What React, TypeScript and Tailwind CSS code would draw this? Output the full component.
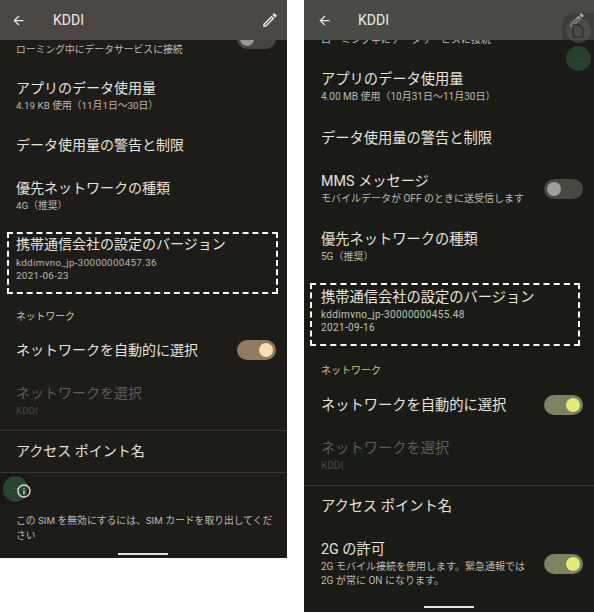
import type { ReactNode } from "react";

const FONT = "font-['Roboto','Noto_Sans_CJK_JP',sans-serif]";

type RowProps = {
  className: string;
  title?: string;
  sub?: string[];
  dim?: boolean;
  wide?: boolean;
  right?: ReactNode;
};

// the right screenshot is scaled very slightly larger than the left one
function Row({ className, title, sub, dim, wide, right }: RowProps) {
  return (
    <div className={`flex items-center justify-between ${className}`}>
      <div className="min-w-0">
        <p className={`${wide ? "text-[14.25px]" : "text-[14px]"} leading-[20px] ${dim ? "text-[#5f5b57]" : "text-[#e8e2dc]"}`}>{title}</p>
        {sub && (
          <div className="mt-[1px]">
            {sub.map((s) => (
              <p key={s} className={`${wide ? "text-[10px]" : "text-[9.8px]"} leading-[14px] ${dim ? "text-[#4b4844]" : "text-[#bfb8b1]"}`}>
                {s}
              </p>
            ))}
          </div>
        )}
      </div>
      {right}
    </div>
  );
}

function Toggle({ on, track, thumb }: { on: boolean; track: string; thumb: string }) {
  return (
    <div className={`flex h-[20px] w-[39px] shrink-0 items-center rounded-full px-[3px] ${on ? "justify-end" : "justify-start"} ${track}`}>
      <div className={`h-[14px] w-[14px] rounded-full ${thumb}`} />
    </div>
  );
}

function Header({ bg, pad, gap }: { bg: string; pad: string; gap: string }) {
  return (
    <div className={`relative z-10 flex h-[40px] items-center ${bg} ${pad}`}>
      <svg viewBox="0 0 24 24" className="h-[15px] w-[15px] fill-[#efe9e4]">
        <path d="M20 11H7.83l5.59-5.59L12 4l-8 8 8 8 1.41-1.41L7.83 13H20v-2z" />
      </svg>
      <span className={`text-[14px] text-[#efe9e4] ${gap}`}>KDDI</span>
      <svg viewBox="0 0 24 24" className="ml-auto h-[18px] w-[18px] fill-[#efe9e4]">
        <path d="M14.06 9.02l.92.92L5.92 19H5v-.92l9.06-9.06M17.66 3c-.25 0-.51.1-.7.29l-1.83 1.83 3.75 3.75 1.83-1.83c.39-.39.39-1.02 0-1.41l-2.34-2.34c-.2-.2-.45-.29-.71-.29zm-3.6 3.19L3 17.25V21h3.75L17.81 9.94l-3.75-3.75z" />
      </svg>
    </div>
  );
}

function LeftPhone() {
  const on = <Toggle on track="bg-[#8f7a62]" thumb="bg-[#fedcb5]" />;
  return (
    <div className="relative h-[558px] w-[287px] shrink-0 overflow-hidden bg-[#1e1c18]">
      <Header bg="bg-[#4c4744]" pad="pl-[11px] pr-[8px]" gap="ml-[27px]" />
      <div className="flex h-[20px] justify-between overflow-hidden pl-[16px] pr-[11px]">
        <p className="text-[9.8px] leading-[20px] text-[#bfb8b1]">ローミング中にデータサービスに接続</p>
        <div className="-mt-[11px]">
          <div className="flex h-[20px] w-[39px] items-center rounded-full bg-[#47433f] px-[3px]">
            <div className="h-[14px] w-[14px] rounded-full bg-[#9d978f]" />
          </div>
        </div>
      </div>
      <Row className="h-[66px] pl-[16px] pr-[11px] pt-[5px]" title="アプリのデータ使用量" sub={["4.19 KB 使用（11月1日〜30日）"]} />
      <Row className="h-[38px] pl-[16px] pr-[11px]" title="データ使用量の警告と制限" />
      <Row className="h-[63px] pl-[16px] pr-[11px]" title="優先ネットワークの種類" sub={["4G（推奨）"]} />
      <div className="ml-[7px] mr-[9px] mt-[5px] h-[62px] border-2 border-dashed border-white pl-[7px]">
        <p className="text-[14px] leading-[20px] text-[#e8e2dc]">携帯通信会社の設定のバージョン</p>
        <p className="mt-[2px] text-[9.8px] leading-[13px] tracking-[0.35px] text-[#bfb8b1]">kddimvno_jp-30000000457.36</p>
        <p className="text-[9.8px] leading-[13px] tracking-[0.35px] text-[#bfb8b1]">2021-06-23</p>
      </div>
      <p className="mt-[16px] pl-[16px] text-[9.8px] leading-[14px] text-[#dcc2a0]">ネットワーク</p>
      <Row className="mt-[7px] h-[38px] pl-[16px] pr-[11px]" title="ネットワークを自動的に選択" right={on} />
      <Row className="h-[61px] pl-[16px] pr-[11px] pt-[2px]" title="ネットワークを選択" sub={["KDDI"]} dim />
      <div className="h-px bg-[#3a3633]" />
      <Row className="h-[41px] pb-[2px] pl-[16px] pr-[11px]" title="アクセス ポイント名" />
      <div className="h-px bg-[#3a3633]" />
      <div className="ml-[16px] mt-[10px]">
        <svg viewBox="0 0 24 24" className="relative z-10 h-[16px] w-[16px] fill-[#e8e2dc]">
          <path d="M11 7h2v2h-2zm0 4h2v6h-2zm1-9C6.48 2 2 6.48 2 12s4.48 10 10 10 10-4.48 10-10S17.52 2 12 2zm0 18c-4.41 0-8-3.59-8-8s3.59-8 8-8 8 3.59 8 8-3.59 8-8 8z" />
        </svg>
      </div>
      <p className="mt-[14px] pl-[16px] pr-[11px] text-[9.8px] leading-[15px] text-[#bfb8b1]">
        この SIM を無効にするには、SIM カードを取り出してください
      </p>
      {/* floating bubble from the screenshot tool */}
      <div className="absolute left-0 top-[473px] flex h-[32px] w-[31px] items-center rounded-r-full bg-[#191714]">
        <div className="ml-[3px] flex h-[26px] w-[25px] items-center justify-center rounded-full bg-[#27452f] text-[8px] leading-none text-[#8b9a8d]">
          ···
        </div>
      </div>
      <div className="absolute bottom-[3px] left-[118px] h-[2px] w-[50px] bg-[#e4e0dc]" />
    </div>
  );
}

function RightPhone() {
  const on = <Toggle on track="bg-[#7e8262]" thumb="bg-[#e2ea78]" />;
  return (
    <div className="relative h-[612px] w-[290px] shrink-0 overflow-hidden bg-[#1a1b16]">
      <Header bg="bg-[#4a4b45]" pad="pl-[13px] pr-[8px]" gap="ml-[26px]" />
      <div className="h-[14px] overflow-hidden pl-[17px]">
        <p className="-mt-[7px] text-[10px] leading-[14px] text-[#c0c2b4]">ローミング中にデータサービスに接続</p>
      </div>
      <Row wide className="h-[65px] pl-[17px] pr-[11px]" title="アプリのデータ使用量" sub={["4.00 MB 使用（10月31日〜11月30日）"]} />
      <Row wide className="h-[38px] pl-[17px] pr-[11px]" title="データ使用量の警告と制限" />
      <Row wide className="h-[63px] pl-[17px] pr-[11px]" title="MMS メッセージ" sub={["モバイルデータが OFF のときに送受信します"]} right={<Toggle on={false} track="bg-[#47483f]" thumb="bg-[#a09f98]" />} />
      <Row wide className="h-[53px] pl-[17px] pr-[11px]" title="優先ネットワークの種類" sub={["5G（推奨）"]} />
      <div className="ml-[6px] mr-[14px] mt-[10px] h-[63px] border-2 border-dashed border-white pl-[9px] pt-[2px]">
        <p className="text-[14.25px] leading-[20px] text-[#e6e6dc]">携帯通信会社の設定のバージョン</p>
        <p className="mt-[1px] text-[10px] leading-[13px] tracking-[0.35px] text-[#c0c2b4]">kddimvno_jp-30000000455.48</p>
        <p className="text-[10px] leading-[13px] tracking-[0.35px] text-[#c0c2b4]">2021-09-16</p>
      </div>
      <p className="mt-[18px] pl-[17px] text-[10px] leading-[14px] text-[#c5cb7a]">ネットワーク</p>
      <Row wide className="mt-[6px] h-[42px] pl-[17px] pr-[11px]" title="ネットワークを自動的に選択" right={on} />
      <Row wide className="h-[59px] pl-[17px] pr-[11px]" title="ネットワークを選択" sub={["KDDI"]} dim />
      <div className="h-px bg-[#3b3c36]" />
      <Row wide className="h-[40px] pl-[17px] pr-[11px]" title="アクセス ポイント名" />
      <Row wide className="h-[75px] pl-[17px] pr-[11px]" title="2G の許可" sub={["2G モバイル接続を使用します。緊急通報では", "2G が常に ON になります。"]} right={on} />
      <div className="absolute right-0 top-[13px] z-20 flex h-[62px] w-[32px] flex-col items-center gap-[3px] rounded-l-[12px] bg-[#1e1f1b]/30 pt-[5px]">
        <div className="flex h-[25px] w-[25px] items-center justify-center rounded-full bg-[#5a5b55]/50">
          <svg viewBox="0 0 24 24" className="h-[16px] w-[16px] fill-none stroke-[#2f302c] stroke-2">
            <path d="M5 3h9l5 5v13H5z" />
          </svg>
        </div>
        <div className="flex h-[25px] w-[25px] items-center justify-center rounded-full bg-[#26402c] text-[8px] leading-none text-[#5f7563]">
          ···
        </div>
      </div>
      <div className="absolute bottom-[4px] left-[120px] h-[2px] w-[50px] bg-[#e4e4dc]" />
    </div>
  );
}

export default function App() {
  return (
    <div className={`flex h-[613px] w-[594px] items-start gap-[17px] bg-white ${FONT}`}>
      <LeftPhone />
      <RightPhone />
    </div>
  );
}
